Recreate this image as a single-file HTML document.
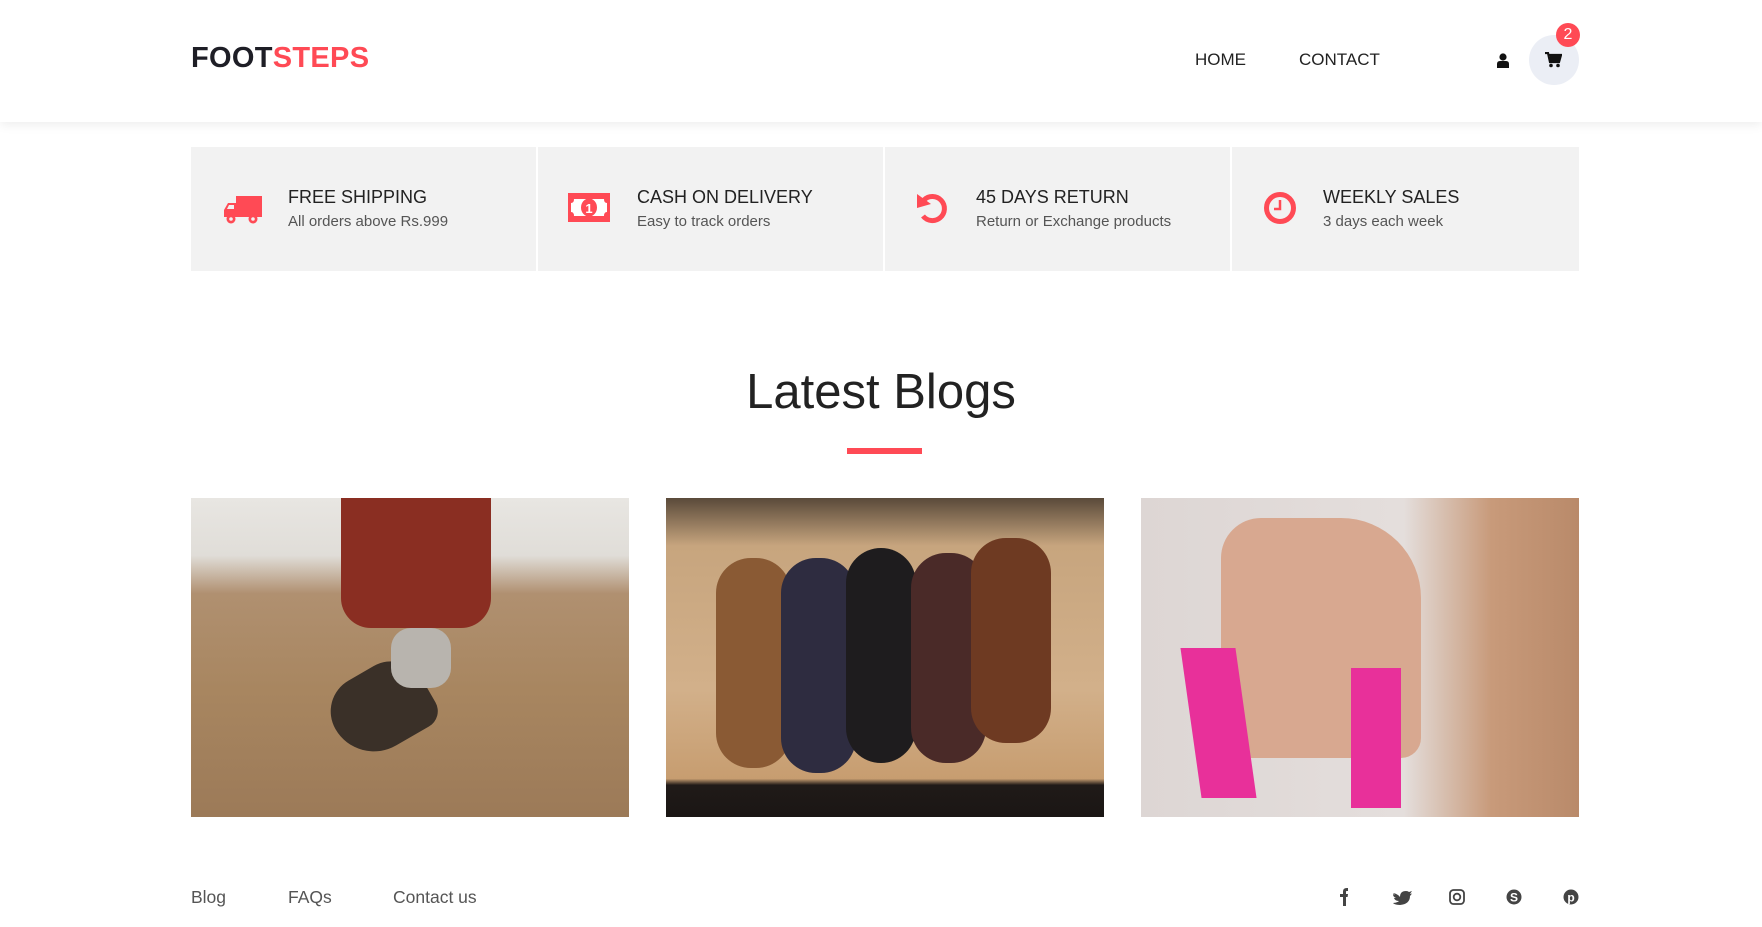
<!DOCTYPE html>
<html><head><meta charset="utf-8"><style>
*{margin:0;padding:0;box-sizing:border-box}
body{width:1762px;height:927px;position:relative;background:#fff;font-family:"Liberation Sans",Arial,sans-serif;overflow:hidden;color:#222}
.a{position:absolute}
header{position:absolute;left:0;top:0;width:1762px;height:122px;background:#fff;box-shadow:0 3px 10px rgba(0,0,0,.07)}
.logo{left:191px;top:42px;font-size:29px;font-weight:bold;letter-spacing:.3px;color:#1e1e26}
.logo span{color:#ff4a55}
.nav{top:50px;font-size:17px;color:#222}
.feat{top:147px;height:124px;background:#f2f2f2}
.t{font-size:18px;color:#222;top:187px}
.s{font-size:15px;color:#555;top:213px}
.img{top:498px;height:319px;width:438px;overflow:hidden}
.foot{top:887px;font-size:17.5px;color:#555}
</style></head><body>
<header>
<div class="a logo">FOOT<span>STEPS</span></div>
<div class="a nav" style="left:1195px">HOME</div>
<div class="a nav" style="left:1299px">CONTACT</div>
<svg class="a" style="left:1497px;top:53px" width="12" height="15" viewBox="0 0 12 15"><circle cx="6" cy="4" r="3.6" fill="#111"/><path d="M0 15 V11 Q0 8 3 8 H9 Q12 8 12 11 V15Z" fill="#111"/></svg>
<div class="a" style="left:1529px;top:35px;width:50px;height:50px;border-radius:50%;background:#ebeef5"></div>
<svg class="a" style="left:1545px;top:52px" width="17" height="16" viewBox="0 0 17 16"><path d="M0 1 H3 L5 10 H14 L16 3 H4" fill="none" stroke="#111" stroke-width="2.2"/><rect x="5" y="3" width="10" height="6" fill="#111"/><circle cx="6" cy="13.5" r="1.8" fill="#111"/><circle cx="13" cy="13.5" r="1.8" fill="#111"/></svg>
<div class="a" style="left:1556px;top:23px;width:24px;height:24px;border-radius:50%;background:#ff4a55;color:#fff;font-size:16px;text-align:center;line-height:24px">2</div>
</header>

<div class="a feat" style="left:191px;width:345px"></div>
<div class="a feat" style="left:538px;width:345px"></div>
<div class="a feat" style="left:885px;width:345px"></div>
<div class="a feat" style="left:1232px;width:347px"></div>

<svg class="a" style="left:224px;top:193px" width="38" height="32" viewBox="0 0 38 32"><path d="M12 3 H38 V24 H12Z M0 17 L4 10 H13 V24 H0Z" fill="#ff4a55"/><path d="M3 16 L5 12 H10 V16Z" fill="#f2f2f2"/><circle cx="7" cy="26" r="4.5" fill="#ff4a55"/><circle cx="7" cy="26" r="1.8" fill="#f2f2f2"/><circle cx="29" cy="26" r="4.5" fill="#ff4a55"/><circle cx="29" cy="26" r="1.8" fill="#f2f2f2"/></svg>
<div class="a t" style="left:288px">FREE SHIPPING</div>
<div class="a s" style="left:288px">All orders above Rs.999</div>

<svg class="a" style="left:568px;top:193px" width="42" height="29" viewBox="0 0 42 29"><rect width="42" height="29" fill="#ff4a55"/><path d="M6 6 H36 Q36 10 39 10 V19 Q36 19 36 23 H6 Q6 19 3 19 V10 Q6 10 6 6Z" fill="#fff"/><ellipse cx="21" cy="14.5" rx="8" ry="9" fill="#ff4a55"/><text x="21" y="20" font-size="13" font-weight="bold" fill="#fff" text-anchor="middle" font-family="Liberation Sans">1</text></svg>
<div class="a t" style="left:637px">CASH ON DELIVERY</div>
<div class="a s" style="left:637px">Easy to track orders</div>

<svg class="a" style="left:915px;top:190px" width="36" height="36" viewBox="0 0 36 36"><path d="M9 10 A12 12 0 1 1 8 26" fill="none" stroke="#ff4a55" stroke-width="5"/><path d="M2 4 L16 14 L2 18Z" fill="#ff4a55"/></svg>
<div class="a t" style="left:976px">45 DAYS RETURN</div>
<div class="a s" style="left:976px">Return or Exchange products</div>

<svg class="a" style="left:1263px;top:191px" width="34" height="34" viewBox="0 0 34 34"><circle cx="17" cy="17" r="13.5" fill="none" stroke="#ff4a55" stroke-width="5"/><path d="M17 9 V18 H11" fill="none" stroke="#ff4a55" stroke-width="2.5"/></svg>
<div class="a t" style="left:1323px">WEEKLY SALES</div>
<div class="a s" style="left:1323px">3 days each week</div>

<div class="a" style="left:0;width:1762px;top:364px;text-align:center;font-size:49px;color:#222">Latest Blogs</div>
<div class="a" style="left:847px;top:448px;width:75px;height:6px;background:#ff4a55"></div>

<div class="a img" style="left:191px;background:linear-gradient(180deg,#e8e6e2 0,#e0ddd8 18%,#b09070 30%,#a88660 60%,#9c7a58 100%)">
<div class="a" style="left:150px;top:0;width:150px;height:130px;background:#8a2e22;border-radius:0 0 30px 30px"></div>
<div class="a" style="left:140px;top:170px;width:100px;height:80px;background:#3a3028;border-radius:40px 40px 20px 50px;transform:rotate(-30deg)"></div>
<div class="a" style="left:200px;top:130px;width:60px;height:60px;background:#b8b4ae;border-radius:20px"></div>
</div>
<div class="a img" style="left:666px;background:linear-gradient(180deg,#5a4a3a 0,#c7a57e 15%,#d2b08a 60%,#c79d70 88%,#201a18 90%,#1a1614 100%)">
<div class="a" style="left:50px;top:60px;width:75px;height:210px;background:#8a5a34;border-radius:35px"></div>
<div class="a" style="left:115px;top:60px;width:75px;height:215px;background:#2e2c40;border-radius:35px"></div>
<div class="a" style="left:180px;top:50px;width:70px;height:215px;background:#1e1c1e;border-radius:35px"></div>
<div class="a" style="left:245px;top:55px;width:75px;height:210px;background:#4a2a28;border-radius:35px"></div>
<div class="a" style="left:305px;top:40px;width:80px;height:205px;background:#6e3a22;border-radius:35px"></div>
</div>
<div class="a img" style="left:1141px;background:linear-gradient(90deg,#ddd6d4 0,#e4dedc 60%,#c89a7a 80%,#b98a6a 100%)">
<div class="a" style="left:80px;top:20px;width:200px;height:240px;background:#d8a890;border-radius:40px 80px 20px 20px"></div>
<div class="a" style="left:50px;top:150px;width:55px;height:150px;background:#e8309a;transform:skewX(8deg)"></div>
<div class="a" style="left:210px;top:170px;width:50px;height:140px;background:#e8309a"></div>
</div>

<div class="a foot" style="left:191px">Blog</div>
<div class="a foot" style="left:288px">FAQs</div>
<div class="a foot" style="left:393px">Contact us</div>
<svg class="a" style="left:1337px;top:888px" width="250" height="18" viewBox="0 0 250 18">
<path d="M6 18 V9 H3 V6 H6 V3.5 Q6 0 10 0 H11 V3 H9.5 Q9 3 9 4 V6 H11 L10.6 9 H9 V18Z" fill="#444"/>
<path d="M56 5 Q61 6 63 9 Q63 3 69 3 Q71 3 72 4 L75 3 L73 6 L75 5.5 Q74 7 73 8 Q73 16 63 17 Q58 17 56 15 Q60 15 62 13 Q58 13 57 10 L59 10 Q56 9 56 6 L58 7 Q56 5 56 5Z" fill="#444"/>
<rect x="113" y="2" width="14" height="14" rx="3.5" fill="none" stroke="#444" stroke-width="1.8"/><circle cx="120" cy="9" r="3.3" fill="none" stroke="#444" stroke-width="1.8"/>
<circle cx="177" cy="9" r="7.5" fill="#444"/><text x="177" y="13.5" font-size="12" font-weight="bold" fill="#fff" text-anchor="middle" font-family="Liberation Sans">S</text>
<circle cx="234" cy="9" r="7.5" fill="#444"/><text x="234" y="13.5" font-size="12" font-weight="bold" fill="#fff" text-anchor="middle" font-family="Liberation Sans">p</text>
</svg>
</body></html>
